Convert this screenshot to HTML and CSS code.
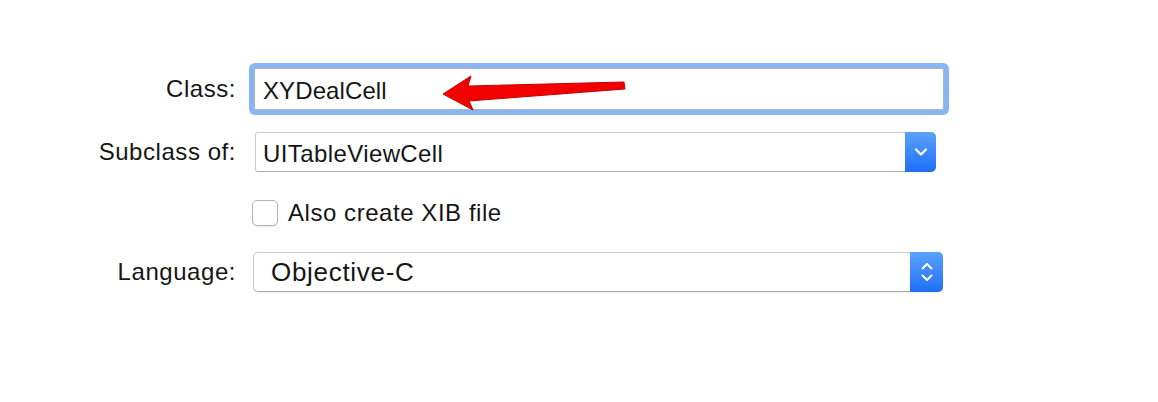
FILE: index.html
```html
<!DOCTYPE html>
<html lang="en">
<head>
    <meta charset="UTF-8">
    <meta name="viewport" content="width=device-width, initial-scale=1.0">
    <title>New File Options</title>
    <link rel="stylesheet" href="styles.css">
</head>
<body>
    <div class="sheet">
        <div class="form">
            <div class="row row-class">
                <label class="label">Class:</label>
                <div class="text-field">XYDealCell</div>
            </div>
            <div class="row row-subclass">
                <label class="label">Subclass of:</label>
                <div class="combo">
                    <span class="combo-text">UITableViewCell</span>
                    <span class="combo-btn">
                        <svg width="14" height="10" viewBox="0 0 14 10"><path d="M2 2.5 L7 7.5 L12 2.5" fill="none" stroke="#fff" stroke-width="2.2" stroke-linecap="round" stroke-linejoin="round"/></svg>
                    </span>
                </div>
            </div>
            <div class="row row-check">
                <span class="label"></span>
                <span class="checkbox"></span>
                <span class="check-text">Also create XIB file</span>
            </div>
            <div class="row row-lang">
                <label class="label">Language:</label>
                <div class="popup">
                    <span class="popup-text">Objective-C</span>
                    <span class="popup-btn">
                        <svg width="14" height="24" viewBox="0 0 14 24"><path d="M2.5 8.5 L7 4 L11.5 8.5 M2.5 15.5 L7 20 L11.5 15.5" fill="none" stroke="#fff" stroke-width="2" stroke-linecap="round" stroke-linejoin="round"/></svg>
                    </span>
                </div>
            </div>
        </div>
        <!-- annotation arrow over the class field -->
        <svg class="arrow" width="192" height="42" viewBox="0 0 192 42">
            <polygon points="3,22 31,4 28,14 184,10 185,17 29,29 33,38" fill="#f20000" stroke="#c40000" stroke-width="1" stroke-linejoin="round"/>
        </svg>
    </div>
</body>
</html>
```

FILE: styles.css
```css
body {
    margin: 0;
    background: #ffffff;
    font-family: "Liberation Sans", Arial, sans-serif;
    color: #161616;
    -webkit-font-smoothing: antialiased;
}
.sheet {
    position: relative;
    width: 1158px;
    height: 402px;
}
.form {
    padding-top: 68px;
}
.row {
    display: flex;
    align-items: center;
}
.label {
    width: 237px;
    padding-right: 1px;
    box-sizing: border-box;
    text-align: right;
    font-size: 24px;
    letter-spacing: 0.55px;
}
.row-class {
    height: 42px;
}
.row-subclass {
    height: 40px;
    margin-top: 22px;
}
.row-check {
    height: 26px;
    margin-top: 28px;
}
.row-lang {
    height: 40px;
    margin-top: 26px;
}
.text-field {
    margin-left: 17px;
    width: 690px;
    height: 42px;
    box-sizing: border-box;
    border: 1px solid #a9b6c8;
    border-radius: 2px;
    box-shadow: 0 0 0 5px #8ab5f3;
    background: #fff;
    padding-left: 8px;
    font-size: 24px;
    letter-spacing: 0.1px;
    line-height: 43px;
}
.combo {
    margin-left: 18px;
    width: 681px;
    height: 40px;
    box-sizing: border-box;
    display: flex;
    border: 1px solid #c9c9c9;
    border-bottom-color: #adadad;
    border-radius: 3px 5px 5px 3px;
    background: #fff;
}
.combo-text {
    flex: 1;
    padding-left: 7px;
    font-size: 24px;
    letter-spacing: 0.4px;
    line-height: 42px;
}
.combo-btn {
    width: 31px;
    margin: -1px -1px -1px 0;
    display: flex;
    align-items: center;
    justify-content: center;
    background: linear-gradient(180deg, #5aa2fb 0%, #1f6ff6 100%);
    border-radius: 0 5px 5px 0;
}
.checkbox {
    margin-left: 15px;
    width: 26px;
    height: 26px;
    box-sizing: border-box;
    border: 1px solid #b3b3b3;
    border-radius: 5px;
    background: #fff;
    box-shadow: 0 1px 1px rgba(0, 0, 0, 0.08);
}
.check-text {
    margin-left: 10px;
    font-size: 24px;
    letter-spacing: 0.55px;
}
.popup {
    margin-left: 16px;
    width: 690px;
    height: 40px;
    box-sizing: border-box;
    display: flex;
    border: 1px solid #cacaca;
    border-bottom-color: #a9a9a9;
    border-radius: 5px;
    background: #fff;
    box-shadow: 0 1px 1px rgba(0, 0, 0, 0.06);
}
.popup-text {
    flex: 1;
    padding-left: 17px;
    font-size: 26px;
    letter-spacing: 0.7px;
    line-height: 38px;
}
.popup-btn {
    width: 33px;
    margin: -1px -1px -1px 0;
    display: flex;
    align-items: center;
    justify-content: center;
    background: linear-gradient(180deg, #5aa2fb 0%, #1f6ff6 100%);
    border-radius: 0 5px 5px 0;
}
.arrow {
    position: absolute;
    left: 440px;
    top: 72px;
}
```
